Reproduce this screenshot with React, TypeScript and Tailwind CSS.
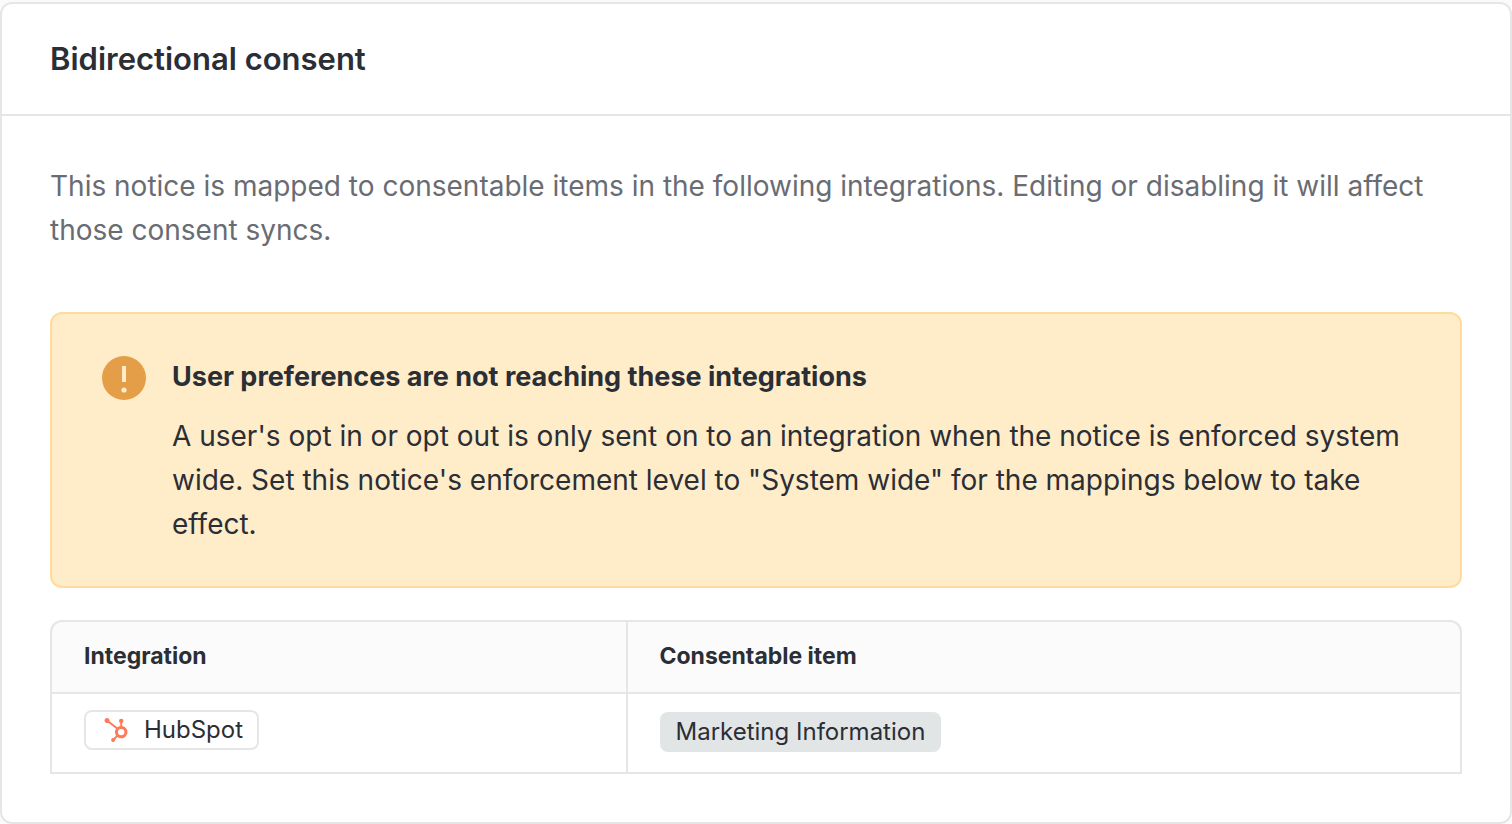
import { SiHubspot } from 'react-icons/si'

const mappings = [{ integration: 'HubSpot', item: 'Marketing Information' }]

function WarningIcon() {
  return (
    <svg className="size-11 shrink-0" viewBox="0 0 44 44" aria-hidden="true">
      <circle cx="22" cy="22" r="22" fill="#e59e48" />
      <path d="M20 10h4v16h-4z" fill="#ffecc9" />
      <circle cx="22" cy="34" r="2.6" fill="#ffecc9" />
    </svg>
  )
}

export default function App() {
  return (
    <div className="min-h-screen bg-[#fafafa] pt-0.5 font-['Inter',sans-serif] text-[#2b2e35]">
      <section className="rounded-xl border-2 border-[#e6e6e6] bg-white">
        <header className="border-b-2 border-[#e6e6e8] px-12 py-8">
          <h1 className="text-[31px] leading-[46px] font-semibold">Bidirectional consent</h1>
        </header>

        <div className="px-12 pt-12 pb-12">
          <p className="text-[28px] leading-[44px] text-[#696c73]">
            This notice is mapped to consentable items in the following integrations. Editing or
            disabling it will affect those consent syncs.
          </p>

          <div
            role="alert"
            className="mt-15 flex gap-[26px] rounded-xl border-2 border-[#ffdb9c] bg-[#ffecc9] px-[50px] pt-[42px] pb-[38px]"
          >
            <WarningIcon />
            <div>
              <h2 className="text-[27px] leading-[42px] font-bold">
                User preferences are not reaching these integrations
              </h2>
              <p className="mt-4 mb-0.5 text-[28px] leading-[44px]">
                A user's opt in or opt out is only sent on to an integration when the notice is
                enforced system wide. Set this notice's enforcement level to "System wide" for the
                mappings below to take effect.
              </p>
            </div>
          </div>

          <table className="mt-8 w-full table-fixed border-separate border-spacing-0 text-left text-2xl">
            <colgroup>
              <col className="w-[40.9%]" />
              <col />
            </colgroup>
            <thead>
              <tr className="text-[23px] leading-[38px]">
                <th
                  scope="col"
                  className="rounded-tl-xl border-2 border-[#e6e6e6] bg-[#fbfbfb] px-8 pt-[15px] pb-[17px] font-bold"
                >
                  Integration
                </th>
                <th
                  scope="col"
                  className="rounded-tr-xl border-2 border-l-0 border-[#e6e6e6] bg-[#fbfbfb] px-8 pt-[15px] pb-[17px] font-bold"
                >
                  Consentable item
                </th>
              </tr>
            </thead>
            <tbody>
              {mappings.map((m) => (
                <tr key={m.integration}>
                  <td className="border-2 border-t-0 border-[#e6e6e6] px-8 pt-4 pb-[22px] align-top">
                    <span className="flex h-10 w-fit items-center gap-4 rounded-lg border-2 border-[#e6e6e6] px-[14px]">
                      <SiHubspot className="ml-1 size-6 text-[#ff7a59]" />
                      {m.integration}
                    </span>
                  </td>
                  <td className="border-r-2 border-b-2 border-[#e6e6e6] px-8 pt-[18px] pb-5 align-top">
                    <span className="flex h-10 w-fit items-center rounded-lg bg-[#e1e5e5] px-4">
                      {m.item}
                    </span>
                  </td>
                </tr>
              ))}
            </tbody>
          </table>
        </div>
      </section>
    </div>
  )
}
